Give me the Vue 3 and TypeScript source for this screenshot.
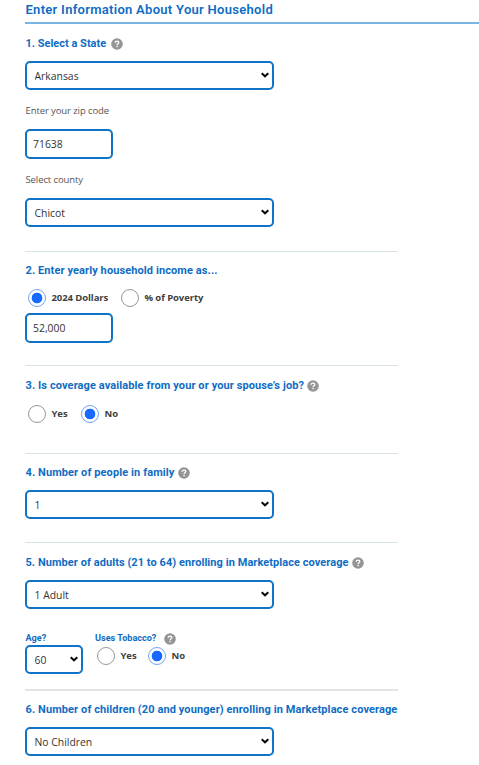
<script setup lang="ts">
import { h, ref } from 'vue'
import type { FunctionalComponent } from 'vue'

const state = ref('Arkansas')
const zip = ref('71638')
const county = ref('Chicot')
const incomeType = ref('dollars')
const income = ref('52,000')
const jobCoverage = ref('no')
const people = ref('1')
const adults = ref('1 Adult')
const age = ref('60')
const tobacco = ref('no')
const children = ref('No Children')

const HelpIcon: FunctionalComponent = () =>
  h('svg', { viewBox: '0 0 12 12', width: 12, height: 12, 'aria-hidden': 'true' }, [
    h('circle', { cx: 6, cy: 6, r: 5.8, fill: '#959595' }),
    h('path', {
      d: 'M4.1 4.7C4.2 3.6 5 3.1 6 3.1C7.1 3.1 7.8 3.7 7.8 4.6C7.8 5.7 6.1 5.8 6.1 7',
      fill: 'none',
      stroke: '#fff',
      'stroke-width': 1.35,
    }),
    h('rect', { x: 5.4, y: 7.8, width: 1.4, height: 1.4, fill: '#fff' }),
  ])

const Chevron: FunctionalComponent = () =>
  h('svg', { viewBox: '0 0 8 6', width: 8, height: 6, 'aria-hidden': 'true' }, [
    h('path', { d: 'M0.7 1.2L4 4.3L7.3 1.2', fill: 'none', stroke: '#0a0a0a', 'stroke-width': 2 }),
  ])
</script>

<template>
  <main class="page">
    <h1 class="title">Enter Information About Your Household</h1>

    <section class="state">
      <h2 class="q q1"><span>1. Select a State</span><HelpIcon class="help" /></h2>
      <div class="select">
        <select v-model="state"><option>Arkansas</option></select><Chevron class="chev" />
      </div>
      <label class="label zip-label" for="zip">Enter your zip code</label>
      <input id="zip" v-model="zip" class="field" type="text" />
      <label class="label county-label" for="county">Select county</label>
      <div class="select">
        <select id="county" v-model="county"><option>Chicot</option></select><Chevron class="chev" />
      </div>
    </section>

    <section class="income">
      <h2 class="q q2"><span>2. Enter yearly household income as...</span></h2>
      <div class="radios">
        <label class="radio dollars"><input v-model="incomeType" type="radio" value="dollars" /><span>2024 Dollars</span></label>
        <label class="radio"><input v-model="incomeType" type="radio" value="poverty" /><span>% of Poverty</span></label>
      </div>
      <input v-model="income" class="field" type="text" aria-label="Income" />
    </section>

    <section class="job">
      <h2 class="q q3"><span>3. Is coverage available from your or your spouse’s job?</span><HelpIcon class="help" /></h2>
      <div class="radios">
        <label class="radio yes"><input v-model="jobCoverage" type="radio" value="yes" /><span>Yes</span></label>
        <label class="radio"><input v-model="jobCoverage" type="radio" value="no" /><span>No</span></label>
      </div>
    </section>

    <section class="family">
      <h2 class="q q4"><span>4. Number of people in family</span><HelpIcon class="help" /></h2>
      <div class="select">
        <select v-model="people"><option>1</option></select><Chevron class="chev" />
      </div>
    </section>

    <section class="adults">
      <h2 class="q q5"><span>5. Number of adults (21 to 64) enrolling in Marketplace coverage</span><HelpIcon class="help" /></h2>
      <div class="select">
        <select v-model="adults"><option>1 Adult</option></select><Chevron class="chev" />
      </div>
      <div class="person">
        <div class="age">
          <h3 class="small"><span>Age?</span></h3>
          <div class="select narrow">
            <select v-model="age"><option>60</option></select><Chevron class="chev" />
          </div>
        </div>
        <div>
          <h3 class="small tobacco"><span>Uses Tobacco?</span><HelpIcon class="help" /></h3>
          <div class="radios">
            <label class="radio yes"><input v-model="tobacco" type="radio" value="yes" /><span>Yes</span></label>
            <label class="radio"><input v-model="tobacco" type="radio" value="no" /><span>No</span></label>
          </div>
        </div>
      </div>
    </section>

    <section class="children">
      <h2 class="q q6"><span>6. Number of children (20 and younger) enrolling in Marketplace coverage</span></h2>
      <div class="select">
        <select v-model="children"><option>No Children</option></select><Chevron class="chev" />
      </div>
    </section>
  </main>
</template>

<style>
body { margin: 0; background: #fff; }
</style>

<style scoped>
.page {
  box-sizing: border-box;
  height: 765px;
  padding-left: 25px;
  overflow: hidden;
  font-family: "Open Sans", "Noto Sans", sans-serif;
  color: #404040;
}
.title {
  box-sizing: border-box;
  height: 24px;
  margin: 0;
  padding-left: 0.5px;
  border-bottom: 2px solid #7ab5e5;
  color: #0f6cc4;
  font: 600 13px/19px Roboto, sans-serif;
  letter-spacing: 0.29px;
  white-space: nowrap;
}
section {
  box-sizing: border-box;
  width: 373px;
}
.income, .job, .family, .adults { border-top: 1px solid #d8e4e4; }
.state { height: 227px; padding-top: 11px; }
.income { height: 114px; padding-top: 10px; }
.job { height: 88px; padding-top: 11px; }
.family { height: 89px; padding-top: 10px; }
.adults { height: 147px; padding-top: 11px; }
.children { height: 76px; padding-top: 10px; border-top: 2px solid #e4e4e4; }
.q {
  display: flex;
  align-items: center;
  height: 18px;
  margin: 0;
  padding-left: 0.5px;
  color: #0f6cc4;
  font: 700 11px/18px Roboto, sans-serif;
  letter-spacing: 0.1px;
  white-space: nowrap;
}
.q1 { letter-spacing: 0; }
.q5 { letter-spacing: 0.06px; }
.help { flex: none; margin-left: 3px; }
.q1 .help { margin-left: 5px; }
.q1 + .select, .q4 + .select, .q5 + .select, .q6 + .select { margin-top: 8px; }
.select {
  display: grid;
  width: 249px;
  height: 29px;
}
.select > * { grid-area: 1 / 1; }
.select select, .field {
  box-sizing: border-box;
  width: 100%;
  height: 100%;
  margin: 0;
  padding: 0 7.5px;
  appearance: none;
  border: 2px solid #0f73c8;
  border-radius: 5px;
  background: #fff;
  color: #333;
  font: 400 10.4px/24px "Open Sans", "Noto Sans", sans-serif;
  outline: none;
}
.chev {
  place-self: center end;
  margin: 0 5.5px 1px 0;
  pointer-events: none;
}
.field {
  display: block;
  width: 88px;
  height: 30px;
  padding: 0 6px 1px;
}
.label {
  display: block;
  height: 16px;
  padding-left: 0.5px;
  color: #555;
  font-size: 9.5px;
  line-height: 16px;
  letter-spacing: -0.1px;
}
.zip-label, .county-label { margin: 13px 0 10px; }
.radios {
  display: flex;
  height: 18px;
  padding-left: 3px;
}
.q2 + .radios { margin: 9px 0 6px; }
.q3 + .radios { margin-top: 10px; }
.radio {
  display: flex;
  align-items: center;
  gap: 5.5px;
  font-size: 9.5px;
  font-weight: 700;
  line-height: 18px;
  letter-spacing: -0.08px;
  white-space: nowrap;
}
.radio input {
  box-sizing: border-box;
  width: 18px;
  height: 18px;
  margin: 0;
  appearance: none;
  border: 1px solid #989898;
  border-radius: 50%;
  background: #fff;
}
.radio input:checked {
  border-color: #6ea4f8;
  background: radial-gradient(circle, #1769ff 0 5px, #fff 5.7px);
}
.dollars { width: 93px; }
.radio.yes { width: 53px; }
.person { display: flex; margin-top: 23px; }
.age { width: 70px; }
.narrow { width: 58px; }
.small {
  display: flex;
  align-items: center;
  height: 13px;
  margin: 0;
  padding-left: 0.5px;
  color: #0f6cc4;
  font: 700 9.1px/13px Roboto, sans-serif;
  white-space: nowrap;
}
.tobacco { padding-left: 0; }
.small .help { margin-left: 7.5px; }
.person .radios { margin-top: 2px; padding-left: 2px; }
.person .radio.yes { width: 51px; }
</style>
